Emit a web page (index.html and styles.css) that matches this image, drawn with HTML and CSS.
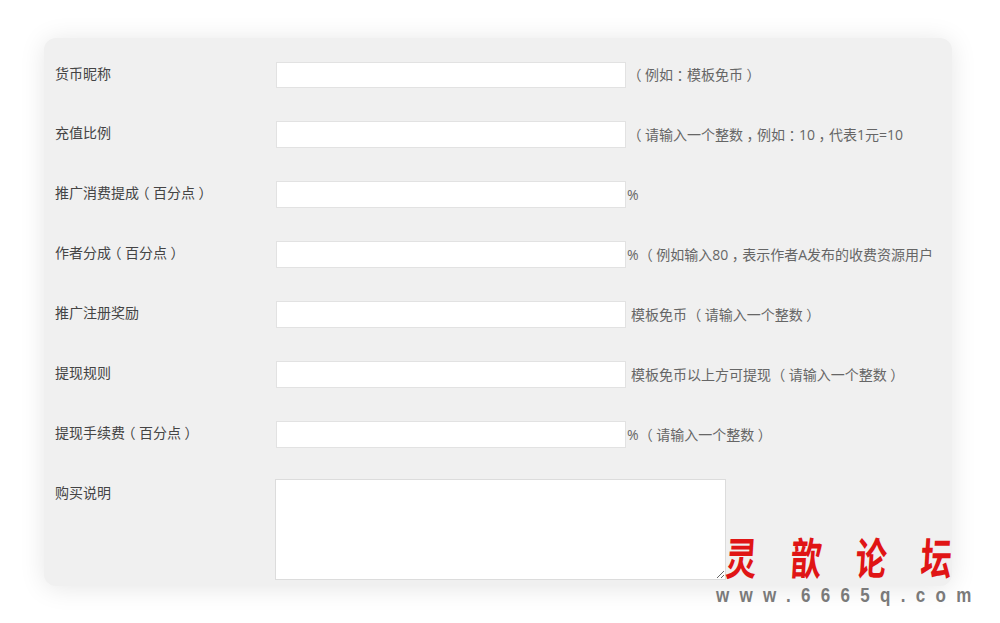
FILE: index.html
```html
<!DOCTYPE html>
<html lang="zh-CN">
<head>
<meta charset="utf-8">
<title>设置</title>
<link rel="stylesheet" href="styles.css">
</head>
<body>
<form class="card">
  <div class="row row-first"><label class="label">货币昵称</label><input class="field" type="text"><span class="hint hint-gap"><span class="p">（</span>例如<span class="p">：</span>模板免币<span class="p">）</span></span></div>
  <div class="row"><label class="label">充值比例</label><input class="field" type="text"><span class="hint hint-gap"><span class="p">（</span>请输入一个整数<span class="p">，</span>例如<span class="p">：</span>10<span class="p">，</span>代表1元=10</span></div>
  <div class="row"><label class="label">推广消费提成<span class="p">（</span>百分点<span class="p">）</span></label><input class="field" type="text"><span class="hint">%</span></div>
  <div class="row"><label class="label">作者分成<span class="p">（</span>百分点<span class="p">）</span></label><input class="field" type="text"><span class="hint">% <span class="p">（</span>例如输入80<span class="p">，</span>表示作者A发布的收费资源用户</span></div>
  <div class="row"><label class="label">推广注册奖励</label><input class="field" type="text"><span class="hint hint-unit">模板免币 <span class="p">（</span>请输入一个整数<span class="p">）</span></span></div>
  <div class="row"><label class="label">提现规则</label><input class="field" type="text"><span class="hint hint-unit">模板免币以上方可提现 <span class="p">（</span>请输入一个整数<span class="p">）</span></span></div>
  <div class="row"><label class="label">提现手续费<span class="p">（</span>百分点<span class="p">）</span></label><input class="field" type="text"><span class="hint">% <span class="p">（</span>请输入一个整数<span class="p">）</span></span></div>
  <div class="row row-area"><label class="label">购买说明</label><textarea class="area"></textarea></div>
</form>
<div class="mark">
  <div class="mark-title"><span class="glyph">灵</span><span class="glyph">歆</span><span class="glyph">论</span><span class="glyph">坛</span></div>
  <div class="mark-url">www.6665q.com</div>
</div>
</body>
</html>
```
FILE: styles.css
```css
* { box-sizing: border-box; }
html, body { margin: 0; padding: 0; }
body {
  width: 1000px;
  height: 623px;
  overflow: hidden;
  background: #fff;
  font-family: "Open Sans", "Noto Sans CJK SC", sans-serif;
  font-size: 14px;
  color: #555;
  position: relative;
  padding: 38px 48px 0 44px;
}
.card {
  height: 548px;
  background: #f0f0f0;
  border-radius: 12px;
  box-shadow: 0 2px 26px rgba(0, 0, 0, 0.1);
  padding: 24px 0 0 11px;
}
.row {
  display: flex;
  align-items: flex-start;
  height: 60px;
  white-space: nowrap;
}
.row-first { height: 59px; }
.row-first .field { height: 26px; }
.row-first .hint { line-height: 26px; }
.row-area { height: 101px; margin-top: -2px; }
.row-area .label { margin-top: 2px; }
.label {
  width: 221px;
  flex: none;
  line-height: 24px;
  color: #444;
}
.field {
  flex: none;
  width: 350px;
  height: 27px;
  background: #fff;
  border: 1px solid #e2e2e2;
  border-radius: 0;
  padding: 0;
  margin: 0;
}
.area {
  flex: none;
  width: 451px;
  height: 101px;
  background: #fff;
  border: 1px solid #dcdcdc;
  margin: 0 0 0 -1px;
  padding: 0;
}
.hint {
  line-height: 28px;
  padding-left: 1px;
  color: #666;
}
.hint-gap { padding-left: 5px; }
.hint-unit { padding-left: 5px; }
.p {
  font-feature-settings: "halt" 1;
  padding: 0 3.5px;
}
.mark {
  position: absolute;
  left: 716px;
  top: 532px;
  width: 262px;
}
.mark-title {
  display: flex;
  justify-content: space-between;
  padding: 0 26px 0 10px;
  font-family: "Noto Sans CJK SC", sans-serif;
  font-size: 31px;
  font-weight: 700;
  line-height: 50px;
  color: #e01515;
}
.glyph {
  display: block;
  transform: scaleY(1.42) skewX(-5deg);
}
.mark-url {
  font-family: "Liberation Sans", sans-serif;
  font-size: 17px;
  font-weight: 700;
  line-height: 24px;
  letter-spacing: 10.3px;
  color: #7a7a7a;
  transform: scaleY(1.2);
  transform-origin: left center;
  margin-top: 2px;
}
```
